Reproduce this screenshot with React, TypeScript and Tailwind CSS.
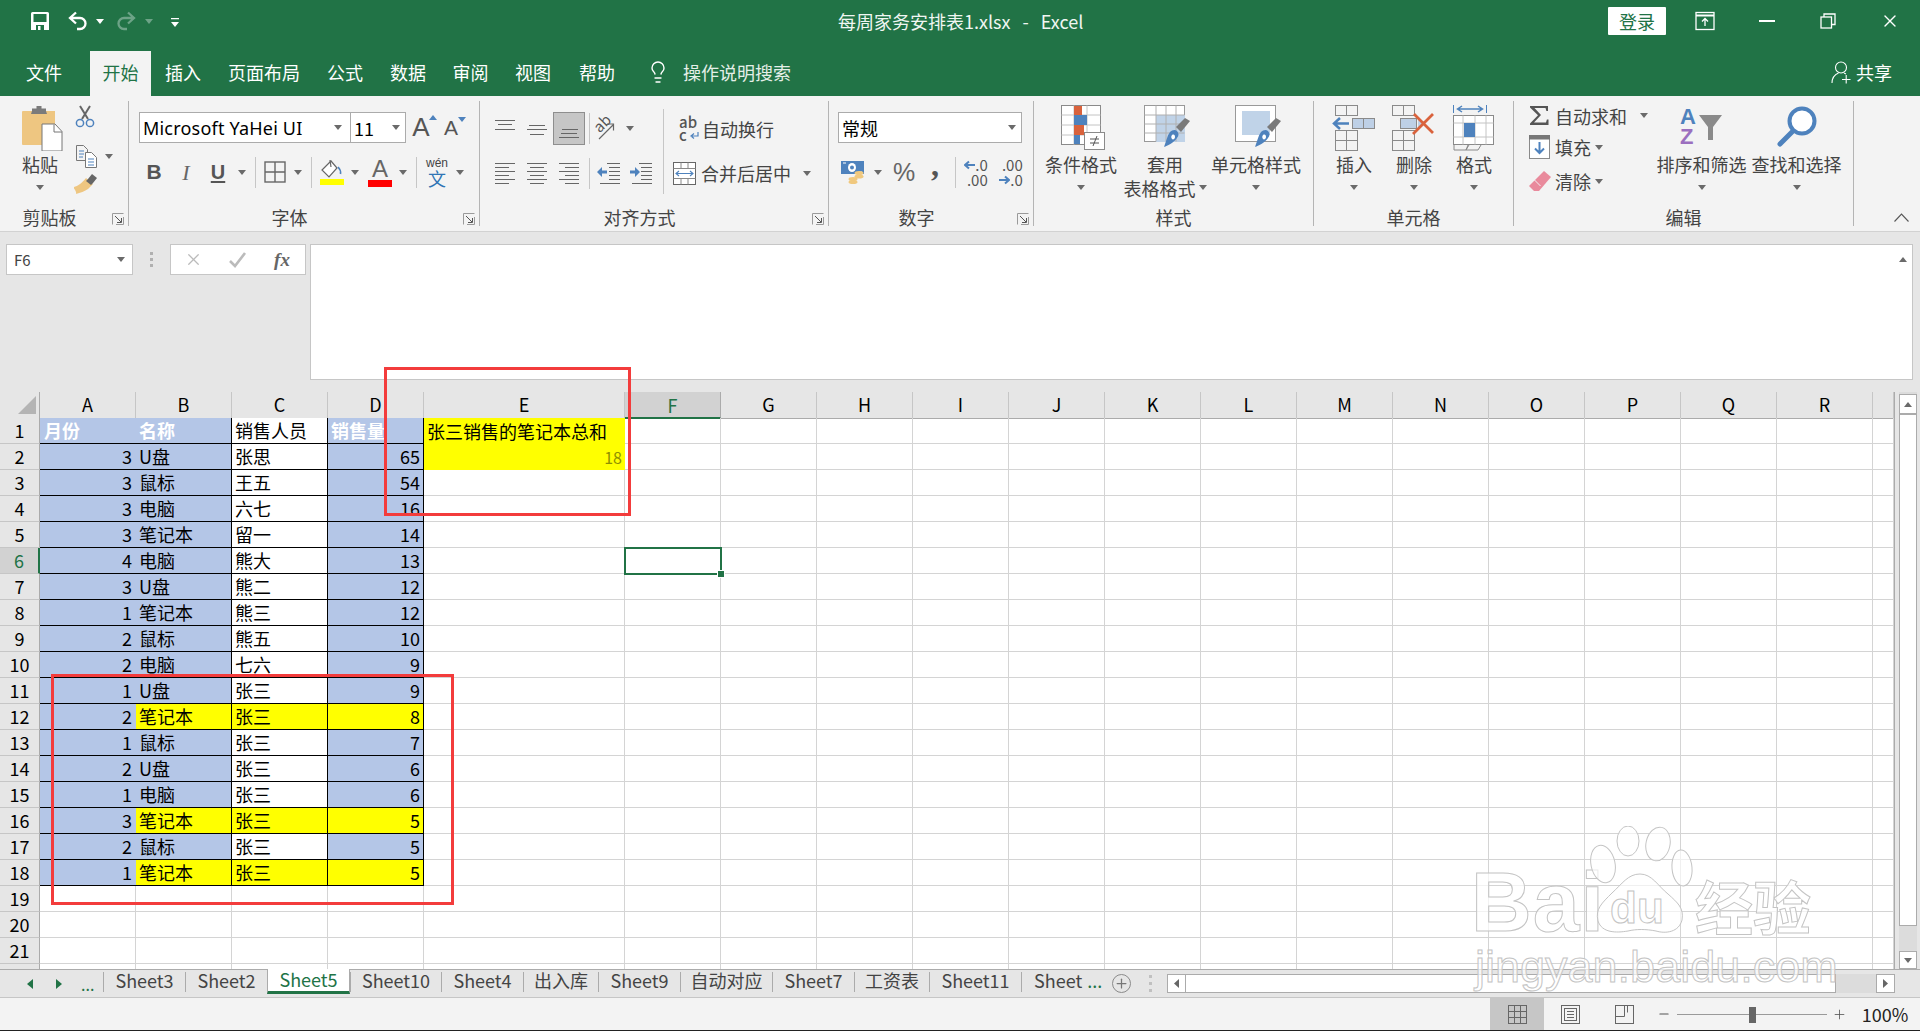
import React from 'react';
import { Minus, Plus, X, Lightbulb } from 'lucide-react';

const Caret = ({ color = '#6a6a6a', up = false }: { color?: string; up?: boolean }) => (
  <svg width="8" height="5" viewBox="0 0 8 5" className="shrink-0">
    <path d={up ? 'M0 5h8L4 0z' : 'M0 0h8L4 5z'} fill={color} />
  </svg>
);

const Launcher = () => (
  <svg width="12" height="12" viewBox="0 0 12 12" className="absolute right-[4px] top-[6px]">
    <path d="M.5 11.5V.5h11" fill="none" stroke="#9a9a9a" />
    <path d="M3 3l6 6M5 9.5h4.5V5" fill="none" stroke="#555" />
    <path d="M11.5 4v7.5H4" fill="none" stroke="#9a9a9a" />
  </svg>
);

const SaveIcon = () => (
  <svg width="20" height="20" viewBox="0 0 20 20">
    <path d="M1 2.5A1.5 1.5 0 0 1 2.5 1h15A1.5 1.5 0 0 1 19 2.5V19H1z" fill="#fff" />
    <rect x="3.5" y="3" width="13" height="8" fill="#217346" />
    <rect x="6" y="14" width="8" height="5" fill="#217346" />
    <rect x="8" y="15" width="2.5" height="4" fill="#fff" />
  </svg>
);

const UndoIcon = ({ color, flip }: { color: string; flip?: boolean }) => (
  <svg width="22" height="22" viewBox="0 0 22 22" className={flip ? '-scale-x-100' : ''}>
    <path d="M9 2.5L3 8l6 5.5M3.5 8H13a5.5 5.5 0 0 1 0 11h-3" fill="none" stroke={color} strokeWidth="2.3" />
  </svg>
);

const QatIcon = () => (
  <svg width="8" height="10" viewBox="0 0 8 10">
    <path d="M0 0h8v1.3H0zM0 4h8L4 9z" fill="#fff" />
  </svg>
);

const RibbonDisplayIcon = () => (
  <svg width="20" height="20" viewBox="0 0 20 20" fill="none" stroke="#fff" strokeWidth="1.3">
    <rect x="1" y="1.5" width="18" height="17" />
    <path d="M1 4.5h18" strokeWidth="2" />
    <path d="M10 15V8M7 10.5L10 7.5l3 3" />
  </svg>
);

const RestoreIcon = () => (
  <svg width="16" height="16" viewBox="0 0 16 16" fill="none" stroke="#fff" strokeWidth="1.3">
    <rect x="1" y="4" width="10.5" height="11" />
    <path d="M4 4V1h11v10.5h-3.5" />
  </svg>
);

const ShareIcon = () => (
  <svg width="20" height="24" viewBox="0 0 20 24" fill="none" stroke="#fff" strokeWidth="1.1">
    <circle cx="10" cy="7.5" r="5.5" />
    <path d="M1 23c0-5 3-8.5 6.5-10M13 13l2 1" />
    <path d="M11 19.5h8.5M15.2 15v8.5" />
  </svg>
);

const PasteIcon = () => (
  <svg width="42" height="46" viewBox="0 0 42 46" className="ml-[3px]">
    <path d="M2 6h32v34H2a1 1 0 0 1-1-1V7a1 1 0 0 1 1-1z" fill="#eec681" />
    <path d="M11 6V3.5h4.5V1h5v2.5H25V6l1 3H10z" fill="#7b7b7b" />
    <path d="M21 19h13l7 7.5V46H21z" fill="#fff" stroke="#777" />
    <path d="M33 19.5V27h8" fill="none" stroke="#777" />
  </svg>
);

const CutIcon = () => (
  <svg width="20" height="23" viewBox="0 0 20 23" fill="none">
    <path d="M5 1l8 13M15 1L7 14" stroke="#666" strokeWidth="2" />
    <circle cx="5" cy="18" r="3.6" stroke="#4e82bd" strokeWidth="1.5" />
    <circle cx="15" cy="18" r="3.6" stroke="#4e82bd" strokeWidth="1.5" />
  </svg>
);

const CopyIcon = () => (
  <svg width="21" height="23" viewBox="0 0 21 23" fill="none">
    <path d="M.5.5h7l4 4v11H.5z" fill="#f3f3f3" stroke="#777" />
    <path d="M9.5 7.5h6l5 5v10h-11z" fill="#fff" stroke="#777" />
    <path d="M3 6h5M3 9h5M3 12h4M12 14h6M12 17h6M12 20h6" stroke="#4e82bd" />
  </svg>
);

const PainterIcon = () => (
  <svg width="24" height="22" viewBox="0 0 24 22">
    <path d="M13 5l7 6-5 5c-3 2-8 4-12 5 1-2-2-5-3-7 4 0 9-4 13-9z" fill="#eec681" transform="translate(-1,0)" />
    <path d="M14 6l4-5 5 4-4 5-2 2-5-4z" fill="#666" />
  </svg>
);

const BorderIcon = () => (
  <svg width="22" height="22" viewBox="0 0 22 22" fill="none" stroke="#666" strokeWidth="1.4">
    <rect x="1" y="1" width="20" height="20" />
    <path d="M11 1v20M1 11h20" />
  </svg>
);

const FillIcon = () => (
  <svg width="26" height="26" viewBox="0 0 26 26">
    <path d="M12 2L3 11l7 7 8-9z" fill="#fff" stroke="#666" strokeWidth="1.2" />
    <path d="M11 1l1 7" stroke="#666" strokeWidth="1.2" />
    <path d="M19 8c2 2 3 4 2.5 7" fill="none" stroke="#4e82bd" strokeWidth="1.6" />
    <rect x="1" y="20" width="24" height="6" fill="#ffff00" />
  </svg>
);

const LineIcon = ({ lines, w = 20, h = 21 }: { lines: [number, number, number][]; w?: number; h?: number }) => (
  <svg width={w} height={h} viewBox={`0 0 ${w} ${h}`}>
    {lines.map(([a, b, y]) => (
      <path key={`${a}-${y}`} d={`M${a} ${y + 0.5}H${b}`} stroke="#666" />
    ))}
  </svg>
);

const stack = (rows: [number, number][]) => rows.map(([a, b], i) => [a, b, i * 4] as [number, number, number]);

const IndentIcon = ({ right }: { right?: boolean }) => (
  <svg width="24" height="21" viewBox="0 0 24 21">
    <path d="M10 .5h13M12 4.5h11M12 8.5h11M12 12.5h11M12 16.5h11M3 20.5h20" stroke="#666" transform="translate(0,0)" />
    <path d={right ? 'M1 7.5h5V4l5 5-5 5v-3.5H1z' : 'M10 7.5H5V4L0 9l5 5v-3.5h5z'} fill="#4e82bd" />
  </svg>
);

const OrientIcon = () => (
  <span className="relative block w-[22px] h-[26px]">
    <span className="absolute left-0 top-[-3px] text-[15px] leading-[20px] text-[#555] -rotate-45 origin-center">ab</span>
    <svg width="24" height="26" viewBox="0 0 24 26" className="absolute left-0 top-0">
      <path d="M6 23L20 9M14 8h6.500v6.500" fill="none" stroke="#666" strokeWidth="1.2" />
    </svg>
  </span>
);

const WrapIcon = () => (
  <span className="relative block w-[20px] h-[28px] text-[#555] text-[15px] leading-[13px] font-medium">
    <span className="block">ab</span>
    <span className="block">c</span>
    <svg width="9" height="8" viewBox="0 0 9 8" className="absolute right-0 bottom-[3px]">
      <path d="M8 0v4H2M4 1.500L1 4l3 2.500" fill="none" stroke="#4e82bd" strokeWidth="1.2" />
    </svg>
  </span>
);

const MergeIcon = () => (
  <svg width="23" height="23" viewBox="0 0 23 23" fill="none">
    <rect x=".5" y=".5" width="22" height="22" fill="#fff" stroke="#666" />
    <path d="M.5 6.500h22M.5 16.500h22M8 .5v6M15 .5v6M8 16.500v6M15 16.500v6" stroke="#888" />
    <path d="M3 11.500h17M6 9l-3 2.500L6 14M17 9l3 2.500L17 14" stroke="#4e82bd" strokeWidth="1.1" />
  </svg>
);

const CurrencyIcon = () => (
  <svg width="24" height="24" viewBox="0 0 24 24">
    <rect x="0" y="1" width="23" height="13" fill="#4e82bd" />
    <ellipse cx="11" cy="7.500" rx="4" ry="4.500" fill="#fff" />
    <circle cx="11" cy="7.500" r="2" fill="#4e82bd" />
    <path d="M2 3h3M18 12h3" stroke="#fff" />
    <ellipse cx="18" cy="13" rx="4.500" ry="2" fill="#f0c87e" />
    <ellipse cx="18" cy="16.500" rx="4.500" ry="2" fill="#f0c87e" />
    <ellipse cx="12" cy="19" rx="4.500" ry="2" fill="#f0c87e" />
    <ellipse cx="12" cy="22" rx="4.500" ry="2" fill="#f0c87e" />
  </svg>
);

const Arrow = ({ right }: { right?: boolean }) => (
  <svg width="11" height="10" viewBox="0 0 11 10">
    <path d={right ? 'M0 5h9M6 1.500L10 5 6 8.500' : 'M11 5H2M5 1.500L1 5l4 3.500'} fill="none" stroke="#4e82bd" strokeWidth="2" />
  </svg>
);

const CondIcon = () => (
  <svg width="46" height="46" viewBox="0 0 46 46" fill="none">
    <rect x=".5" y=".5" width="39" height="39" fill="#fff" stroke="#8a8a8a" />
    <path d="M13 .5v39M26 .5v39M.5 10h39M.5 20h39M.5 30h39" stroke="#c4c4c4" />
    <rect x="13" y="1" width="8" height="9" fill="#d9623c" />
    <rect x="13" y="10" width="13" height="10" fill="#4e82bd" />
    <rect x="13" y="20" width="10" height="10" fill="#d9623c" />
    <rect x="13" y="30" width="6" height="9" fill="#4e82bd" />
    <rect x="23.500" y="27.500" width="20" height="17" fill="#fff" stroke="#8a8a8a" />
    <path d="M29 34h9M29 38h9M36 31l-4 10" stroke="#555" />
  </svg>
);

const TableIcon = ({ grid }: { grid?: boolean }) => (
  <svg width="46" height="44" viewBox="0 0 46 44" fill="none">
    <rect x=".5" y=".5" width="40" height="36" fill="#fff" stroke="#999" />
    <rect x={grid ? 7 : 12} y={grid ? 6 : 10} width={grid ? 28 : 29} height={grid ? 24 : 27} fill="#c0d3e8" />
    {grid ? null : <path d="M12 .5v36M22 .5v36M32 .5v36M.5 10h40M.5 19h40M.5 28h40" stroke="#b0b0b0" />}
    <path d="M32 21l9-9 5 3-9 11z" fill="#7a7a7a" transform="translate(0,1)" />
    <path d="M26 27c2-2 5-3 7-1 2 2 2 5 0 7-3 4-6 6-13 9 2-5 3-11 6-15z" fill="#4e82bd" />
    <path d="M28 30c2-1 3 0 3 2s-2 3-3 2-1-3 0-4z" fill="#fff" />
  </svg>
);

const InsertIcon = () => (
  <svg width="44" height="46" viewBox="0 0 44 46" fill="none" stroke="#8a8a8a">
    <rect x="3.500" y=".5" width="22" height="10" />
    <path d="M14.500 .5v10" />
    <rect x="3.500" y="25.500" width="22" height="20" />
    <path d="M14.500 25.500v20M3.500 35.500h22" />
    <rect x="20.500" y="13.500" width="22" height="10" fill="#bed0e6" />
    <path d="M31.500 13.500v10" />
    <path d="M17 18.500H3M8 13l-6 5.500L8 24" stroke="#4e82bd" strokeWidth="2.500" />
  </svg>
);

const DeleteIcon = () => (
  <svg width="44" height="46" viewBox="0 0 44 46" fill="none" stroke="#8a8a8a">
    <rect x=".5" y=".5" width="22" height="10" />
    <path d="M11.500 .5v10" />
    <rect x=".5" y="25.500" width="22" height="20" />
    <path d="M11.500 25.500v20M.5 35.500h22" />
    <rect x="8.500" y="13.500" width="16" height="10" fill="#bed0e6" />
    <path d="M26 13.500l5 5-5 5z" fill="#bed0e6" stroke="none" />
    <path d="M22 9l19 19M41 9L21 29" stroke="#d9623c" strokeWidth="2.800" />
  </svg>
);

const FormatIcon = () => (
  <svg width="42" height="46" viewBox="0 0 42 46" fill="none">
    <path d="M.5 0v8M33.500 0v8" stroke="#4e82bd" />
    <path d="M5 4h24M9 1L4.500 4 9 7M25 1l4.500 3L25 7" stroke="#4e82bd" strokeWidth="1.500" />
    <rect x=".5" y="10.500" width="40" height="29" fill="#fff" stroke="#8a8a8a" />
    <path d="M10 10.500v29M22 10.500v29M33 10.500v29M.5 18h40M.5 32h40" stroke="#c4c4c4" />
    <rect x="11" y="18" width="11" height="14" fill="#4e82bd" />
    <path d="M1 40v5h12l2-5M16 40l-3 5h12l3-5" stroke="#8a8a8a" />
  </svg>
);

const SigmaIcon = () => (
  <svg width="19" height="19" viewBox="0 0 19 19">
    <path d="M0 0h18v5h-1.600l-.9-3H4.500L11 9l-7 7.500h12l.9-3H18.500V19H0v-1.500L8 9.300 0 1.500z" fill="#555" />
  </svg>
);

const FillDownIcon = () => (
  <svg width="21" height="24" viewBox="0 0 21 24" fill="none">
    <rect x=".5" y=".5" width="20" height="23" fill="#fff" stroke="#8a8a8a" />
    <rect x="0" y="0" width="21" height="4.500" fill="#777" />
    <path d="M10.500 7v11M6 13.500l4.500 4.500 4.500-4.500" stroke="#4e82bd" strokeWidth="2" />
  </svg>
);

const EraserIcon = () => (
  <svg width="22" height="21" viewBox="0 0 22 21">
    <path d="M15 0l7 6-12 14H5l-5-5z" fill="#e98a9c" />
    <path d="M5.500 9l6 6" stroke="#f3f3f3" />
  </svg>
);

const SortIcon = () => (
  <svg width="44" height="42" viewBox="0 0 44 42">
    <text x="0" y="19" fontSize="22" fontWeight="700" fill="#4e82bd" fontFamily="Liberation Sans">A</text>
    <text x="0" y="39" fontSize="22" fontWeight="700" fill="#9b6fbf" fontFamily="Liberation Sans">Z</text>
    <path d="M19 10h23L33 22v13h-5V22z" fill="#8a8a8a" />
  </svg>
);

const FindIcon = () => (
  <svg width="44" height="42" viewBox="0 0 44 42" fill="none">
    <circle cx="27" cy="16" r="12.500" stroke="#4e82bd" strokeWidth="4" fill="#fff" />
    <path d="M17 27L5 39" stroke="#4e82bd" strokeWidth="5" strokeLinecap="round" />
  </svg>
);

const Sep = ({ h = 31 }: { h?: number }) => (
  <span className="block w-px bg-[#c6c6c6]" style={{ height: h }} />
);

const Slot = ({ w, children }: { w: number; children?: React.ReactNode }) => (
  <div className="flex items-center justify-center shrink-0" style={{ width: w }}>
    {children}
  </div>
);

const Group = ({ w, label, launcher, children }: { w: number; label: string; launcher?: boolean; children: React.ReactNode }) => (
  <div className="flex flex-col shrink-0 h-[125px] border-r border-[#b4b4b4]" style={{ width: w }}>
    <div className="h-[106px]">{children}</div>
    <div className={`relative h-[19px] pt-[2px] flex items-center justify-center text-[18px] leading-[19px] text-[#444] ${launcher ? 'pr-[29px]' : ''}`}>
      {label}
      {launcher && <Launcher />}
    </div>
  </div>
);

const BigButton = ({ w, icon, line1, line2, caretRight }: { w: number; icon: React.ReactNode; line1: string; line2?: string; caretRight?: boolean }) => (
  <div className="flex flex-col items-center shrink-0" style={{ width: w }}>
    <div className="h-[47px] mt-[3px] flex items-start justify-center">{icon}</div>
    <div className="h-[24px] text-[18px] leading-[24px] text-[#444] whitespace-nowrap">{line1}</div>
    <div className="h-[23px] flex items-center gap-[3px] text-[18px] leading-[22px] text-[#444] whitespace-nowrap">
      {line2}
      {(!line2 || caretRight) && <Caret />}
    </div>
  </div>
);

const MENU: [string, number][] = [
  ['插入', 64],
  ['页面布局', 98],
  ['公式', 64],
  ['数据', 62],
  ['审阅', 63],
  ['视图', 62],
  ['帮助', 66],
];

const COLS = ['A', 'B', 'C', 'D', 'E', 'F', 'G', 'H', 'I', 'J', 'K', 'L', 'M', 'N', 'O', 'P', 'Q', 'R', ''];

const DATA: [string, string, string, string, boolean][] = [
  ['3', 'U盘', '张思', '65', false],
  ['3', '鼠标', '王五', '54', false],
  ['3', '电脑', '六七', '16', false],
  ['3', '笔记本', '留一', '14', false],
  ['4', '电脑', '熊大', '13', false],
  ['3', 'U盘', '熊二', '12', false],
  ['1', '笔记本', '熊三', '12', false],
  ['2', '鼠标', '熊五', '10', false],
  ['2', '电脑', '七六', '9', false],
  ['1', 'U盘', '张三', '9', false],
  ['2', '笔记本', '张三', '8', true],
  ['1', '鼠标', '张三', '7', false],
  ['2', 'U盘', '张三', '6', false],
  ['1', '电脑', '张三', '6', false],
  ['3', '笔记本', '张三', '5', true],
  ['2', '鼠标', '张三', '5', false],
  ['1', '笔记本', '张三', '5', true],
];

const SHEETS: [string, number][] = [
  ['Sheet3', 82],
  ['Sheet2', 82],
  ['Sheet5', 83],
  ['Sheet10', 91],
  ['Sheet4', 82],
  ['出入库', 75],
  ['Sheet9', 82],
  ['自动对应', 92],
  ['Sheet7', 82],
  ['工资表', 75],
  ['Sheet11', 92],
];

const GRID_LINE = 'border-r border-b border-[#d4d4d4]';
const CELL = 'flex items-center overflow-hidden whitespace-nowrap text-[18px] leading-[24px] pb-[1px] text-black';

function HeaderRow() {
  return (
    <>
      <div className="h-[27px] bg-[#e6e6e6] border-r border-b border-[#ababab] flex items-end justify-end pr-[3px] pb-[4px]">
        <svg width="18" height="18" viewBox="0 0 18 18">
          <path d="M18 0v18H0z" fill="#b4b4b4" />
        </svg>
      </div>
      {COLS.map(c =>
        c === 'F' ? (
          <div key="F" className="h-[27px] bg-[#d2d2d2] border-r border-[#ababab] border-b-2 border-b-[#217346] flex items-center justify-center text-[18px] leading-[24px] text-[#217346]">
            F
          </div>
        ) : (
          <div key={c || 'S'} className="h-[27px] pb-[2px] bg-[#e6e6e6] border-r border-r-[#c6c6c6] border-b border-b-[#ababab] flex items-center justify-center text-[18px] leading-[24px] text-black">
            {c}
          </div>
        ),
      )}
    </>
  );
}

function Blanks({ row, from }: { row: number; from: number }) {
  return (
    <>
      {COLS.slice(from).map((c, i) =>
        row === 6 && c === 'F' ? (
          <div key={i} className="relative z-10 outline-2 -outline-offset-1 outline-[#217346]">
            <span className="absolute right-[-4px] bottom-[-4px] w-[6px] h-[6px] bg-[#217346] border border-white box-content" />
          </div>
        ) : (
          <div key={i} className={GRID_LINE} />
        ),
      )}
    </>
  );
}

function RowHead({ n }: { n?: number }) {
  return n === 6 ? (
    <div className="bg-[#d2d2d2] border-b border-b-[#c6c6c6] border-r-2 border-r-[#217346] flex items-center justify-center pb-[1px] text-[18px] leading-[24px] text-[#217346]">
      {n}
    </div>
  ) : (
    <div className="bg-[#e6e6e6] border-b border-b-[#c6c6c6] border-r border-r-[#ababab] flex items-center justify-center pb-[1px] text-[18px] leading-[24px] text-black">
      {n}
    </div>
  );
}

function Sheet() {
  return (
    <div className="grid grid-cols-[40px_repeat(4,96px)_201px_repeat(13,96px)_21px] auto-rows-[26px] bg-white">
      <HeaderRow />
      <RowHead n={1} />
      <div className={`${CELL} bg-[#b4c6e7] border-b border-black pl-[4px] font-bold`}><span className="text-white">月份</span></div>
      <div className={`${CELL} bg-[#b4c6e7] border-b border-r border-black pl-[3px] font-bold`}><span className="text-white">名称</span></div>
      <div className={`${CELL} bg-white border-b border-r border-black pl-[3px]`}>销售人员</div>
      <div className={`${CELL} bg-[#b4c6e7] border-b border-r border-black pl-[3px] font-bold`}><span className="text-white">销售量</span></div>
      <div className={`${CELL} bg-[#ffff00] pl-[3px]`}>张三销售的笔记本总和</div>
      <Blanks row={1} from={5} />
      {DATA.map((r, i) => {
        const n = i + 2;
        return (
          <React.Fragment key={n}>
            <RowHead n={n} />
            <div className={`${CELL} justify-end bg-[#b4c6e7] border-b border-black pr-[4px]`}>{r[0]}</div>
            <div className={`${CELL} ${r[4] ? 'bg-[#ffff00]' : 'bg-[#b4c6e7]'} border-b border-r border-black pl-[3px]`}>{r[1]}</div>
            <div className={`${CELL} ${r[4] ? 'bg-[#ffff00]' : 'bg-white'} border-b border-r border-black pl-[3px]`}>{r[2]}</div>
            <div className={`${CELL} justify-end ${r[4] ? 'bg-[#ffff00]' : 'bg-[#b4c6e7]'} border-b border-r border-black pr-[3px]`}>{r[3]}</div>
            {n === 2 ? (
              <div className={`${CELL} justify-end bg-[#ffff00] pr-[3px]`}>
                <span className="text-[16px] text-[#8f8f00]">18</span>
              </div>
            ) : (
              <div className={GRID_LINE} />
            )}
            <Blanks row={n} from={5} />
          </React.Fragment>
        );
      })}
      {[19, 20, 21].map(n => (
        <React.Fragment key={n}>
          <RowHead n={n} />
          <Blanks row={n} from={0} />
        </React.Fragment>
      ))}
      <RowHead />
      <Blanks row={22} from={0} />
    </div>
  );
}

function Ribbon() {
  return (
    <div className="h-[136px] shrink-0 bg-[#f3f3f3] border-b border-[#d2d2d2] pt-[5px] flex text-[#444]">
      <Group w={129} label="剪贴板" launcher>
        <div className="flex pt-[1px]">
          <div className="ml-[16px] w-[48px]">
            <BigButton w={48} icon={<PasteIcon />} line1="粘贴" />
          </div>
          <div className="ml-[10px] flex flex-col pt-[3px]">
            <div className="h-[34px] pl-[1px]"><CutIcon /></div>
            <div className="h-[34px] flex items-center gap-[8px] pl-[2px]">
              <CopyIcon />
              <Caret />
            </div>
            <div className="h-[24px]"><PainterIcon /></div>
          </div>
        </div>
      </Group>

      <Group w={351} label="字体" launcher>
        <div className="flex flex-col pt-[11px] pl-[10px]">
          <div className="flex h-[31px]">
            <div className="w-[212px] border border-[#ababab] bg-white flex items-center justify-between pl-[3px] pr-[8px] text-[18px] leading-[24px] text-black tracking-[0.2px] [font-family:'Noto_Sans',sans-serif]">
              Microsoft YaHei UI
              <Caret />
            </div>
            <div className="w-[56px] -ml-px border border-[#ababab] bg-white flex items-center justify-between pl-[3px] pr-[5px] text-[18px] leading-[24px] text-black">
              11
              <Caret />
            </div>
            <Slot w={30}>
              <span className="relative text-[26px] leading-[31px] font-medium text-[#555] [font-family:'Liberation_Sans',sans-serif]">
                A
                <span className="absolute right-[-7px] top-[3px]"><Caret color="#4e82bd" up /></span>
              </span>
            </Slot>
            <Slot w={30}>
              <span className="relative text-[21px] leading-[31px] font-medium text-[#555] [font-family:'Liberation_Sans',sans-serif]">
                A
                <span className="absolute right-[-8px] top-[5px]"><Caret color="#4e82bd" /></span>
              </span>
            </Slot>
          </div>
          <div className="flex items-center h-[32px] mt-[13px] -ml-px">
            <Slot w={32}><span className="text-[21px] font-bold text-[#555] [font-family:'Liberation_Sans',sans-serif]">B</span></Slot>
            <Slot w={32}><span className="text-[22px] italic font-medium text-[#666] [font-family:'Liberation_Serif',serif]">I</span></Slot>
            <Slot w={32}><span className="text-[20px] font-bold underline underline-offset-2 text-[#555] [font-family:'Liberation_Sans',sans-serif]">U</span></Slot>
            <Slot w={16}><Caret /></Slot>
            <Slot w={10}><Sep /></Slot>
            <Slot w={30}><BorderIcon /></Slot>
            <Slot w={16}><Caret /></Slot>
            <Slot w={10}><Sep /></Slot>
            <Slot w={32}><FillIcon /></Slot>
            <Slot w={14}><Caret /></Slot>
            <Slot w={36}>
              <span className="flex flex-col items-center">
                <span className="text-[24px] leading-[22px] font-medium text-[#666] [font-family:'Liberation_Sans',sans-serif]">A</span>
                <span className="block w-[24px] h-[7px] bg-[#ff0000]" />
              </span>
            </Slot>
            <Slot w={10}><Caret /></Slot>
            <Slot w={16}><Sep /></Slot>
            <Slot w={26}>
              <span className="flex flex-col items-center text-[#2f75b5]">
                <span className="text-[12px] leading-[12px] text-[#444] [font-family:'Liberation_Sans',sans-serif]">wén</span>
                <span className="text-[18px] leading-[19px]">文</span>
              </span>
            </Slot>
            <Slot w={20}><Caret /></Slot>
          </div>
        </div>
      </Group>

      <Group w={349} label="对齐方式" launcher>
        <div className="flex pt-[11px] pl-[9px]">
          <div className="flex flex-col w-[168px]">
            <div className="flex h-[33px] items-center">
              <Slot w={32}><LineIcon w={20} h={18} lines={[[0, 20, 0], [3, 17, 4], [0, 20, 9]]} /></Slot>
              <Slot w={32}><LineIcon w={20} h={18} lines={[[2, 18, 5], [0, 20, 9], [3, 17, 14]]} /></Slot>
              <Slot w={32}>
                <div className="w-[32px] h-[33px] bg-[#c6c6c6] border border-[#8e8e8e] flex items-end justify-center pb-[5px]">
                  <LineIcon w={20} h={10} lines={[[3, 19, 0], [2, 18, 4], [0, 20, 8]]} />
                </div>
              </Slot>
              <Slot w={8}><Sep /></Slot>
              <Slot w={20}><OrientIcon /></Slot>
              <Slot w={34}><Caret /></Slot>
            </div>
            <div className="flex h-[32px] items-center mt-[12px]">
              <Slot w={32}><LineIcon lines={stack([[0, 20], [0, 14], [0, 20], [0, 14], [0, 20], [0, 14]])} /></Slot>
              <Slot w={32}><LineIcon lines={stack([[0, 20], [3, 17], [0, 20], [3, 17], [0, 20], [3, 17]])} /></Slot>
              <Slot w={32}><LineIcon lines={stack([[0, 20], [6, 20], [0, 20], [6, 20], [0, 20], [6, 20]])} /></Slot>
              <Slot w={8}><Sep /></Slot>
              <Slot w={32}><IndentIcon /></Slot>
              <Slot w={32}><IndentIcon right /></Slot>
            </div>
          </div>
          <div className="flex items-start justify-center w-[13px] -mt-[3px]"><Sep h={85} /></div>
          <div className="flex flex-col">
            <div className="flex items-center h-[33px] pl-[9px] gap-[3px]">
              <WrapIcon />
              <span className="text-[18px] leading-[24px]">自动换行</span>
            </div>
            <div className="flex items-center h-[32px] mt-[12px] pl-[3px]">
              <MergeIcon />
              <span className="text-[18px] leading-[24px] ml-[5px] whitespace-nowrap">合并后居中</span>
              <span className="ml-[12px]"><Caret /></span>
            </div>
          </div>
        </div>
      </Group>

      <Group w={205} label="数字" launcher>
        <div className="flex flex-col pt-[11px] pl-[9px]">
          <div className="w-[184px] h-[31px] border border-[#ababab] bg-white flex items-center justify-between pl-[3px] pr-[5px] text-[18px] leading-[24px] text-black">
            常规
            <Caret />
          </div>
          <div className="flex items-center h-[32px] mt-[13px] text-[#555]">
            <Slot w={30}><CurrencyIcon /></Slot>
            <Slot w={20}><Caret /></Slot>
            <Slot w={32}><span className="text-[25px] leading-[30px] [font-family:'Liberation_Sans',sans-serif] text-[#666]">%</span></Slot>
            <Slot w={30}><span className="text-[32px] leading-[20px] font-bold text-[#555] [font-family:'Liberation_Serif',serif] -mt-[14px]">,</span></Slot>
            <Slot w={10}><Sep /></Slot>
            <Slot w={32}>
              <span className="flex flex-col items-end text-[15px] leading-[15px] text-[#555]">
                <span className="flex items-center"><Arrow />.0</span>
                <span>.00</span>
              </span>
            </Slot>
            <Slot w={38}>
              <span className="flex flex-col items-end text-[15px] leading-[15px] text-[#555]">
                <span>.00</span>
                <span className="flex items-center"><Arrow right />.0</span>
              </span>
            </Slot>
          </div>
        </div>
      </Group>

      <Group w={280} label="样式">
        <div className="flex pl-[5px] pt-[1px]">
          <BigButton w={84} icon={<span className="ml-[5px] block"><CondIcon /></span>} line1="条件格式" />
          <BigButton w={84} icon={<span className="ml-[3px] block"><TableIcon /></span>} line1="套用" line2="表格格式" caretRight />
          <BigButton w={98} icon={<span className="ml-[3px] block"><TableIcon grid /></span>} line1="单元格样式" />
        </div>
      </Group>

      <Group w={200} label="单元格">
        <div className="flex pl-[10px] pt-[1px]">
          <BigButton w={60} icon={<InsertIcon />} line1="插入" />
          <BigButton w={60} icon={<DeleteIcon />} line1="删除" />
          <BigButton w={60} icon={<FormatIcon />} line1="格式" />
        </div>
      </Group>

      <Group w={340} label="编辑">
        <div className="flex">
          <div className="w-[140px] pl-[15px] flex flex-col text-[18px] leading-[24px]">
            <div className="flex items-center h-[29px]">
              <Slot w={21}><SigmaIcon /></Slot>
              <span className="ml-[5px]">自动求和</span>
              <span className="ml-[13px]"><Caret /></span>
            </div>
            <div className="flex items-center h-[34px]">
              <Slot w={21}><FillDownIcon /></Slot>
              <span className="ml-[5px]">填充</span>
              <span className="ml-[4px]"><Caret /></span>
            </div>
            <div className="flex items-center h-[34px]">
              <Slot w={22}><EraserIcon /></Slot>
              <span className="ml-[4px]">清除</span>
              <span className="ml-[4px]"><Caret /></span>
            </div>
          </div>
          <div className="flex pt-[1px]">
            <BigButton w={95} icon={<SortIcon />} line1="排序和筛选" />
            <BigButton w={95} icon={<FindIcon />} line1="查找和选择" />
          </div>
        </div>
      </Group>

      <div className="flex-1 flex items-end justify-end pr-[11px] pb-[9px]">
        <svg width="15" height="9" viewBox="0 0 15 9">
          <path d="M.5 8.500L7.500 1l7 7.500" fill="none" stroke="#555" strokeWidth="1.100" />
        </svg>
      </div>
    </div>
  );
}

function FormulaBar() {
  return (
    <div className="h-[160px] shrink-0 bg-[#e6e6e6] pt-[12px] flex items-start">
      <div className="ml-[6px] w-[127px] h-[31px] border border-[#c6c6c6] bg-white flex items-center justify-between pl-[7px] pr-[7px] text-[15px] leading-[20px] text-[#444]">
        F6
        <Caret />
      </div>
      <div className="w-[37px] h-[31px] flex flex-col items-center justify-center gap-[3px]">
        <span className="w-[3px] h-[3px] bg-[#b0b0b0]" />
        <span className="w-[3px] h-[3px] bg-[#b0b0b0]" />
        <span className="w-[3px] h-[3px] bg-[#b0b0b0]" />
      </div>
      <div className="w-[136px] h-[31px] border border-[#c6c6c6] bg-white flex items-center">
        <Slot w={44}>
          <X size={19} strokeWidth={1.6} color="#bbb" />
        </Slot>
        <Slot w={45}>
          <svg width="18" height="16" viewBox="0 0 18 16">
            <path d="M1 9l5 5L16 1" fill="none" stroke="#bbb" strokeWidth="2.600" />
          </svg>
        </Slot>
        <Slot w={44}>
          <span className="text-[19px] leading-[24px] italic font-bold text-[#666] [font-family:'Liberation_Serif',serif]">fx</span>
        </Slot>
      </div>
      <div className="ml-[4px] w-[1603px] h-[136px] border border-[#c6c6c6] bg-white flex justify-end pt-[12px] pr-[5px]">
        <Caret up />
      </div>
    </div>
  );
}

function VScroll() {
  return (
    <div className="ml-[4px] w-[18px] flex flex-col bg-[#dcdcdc] self-stretch">
      <div className="h-[21px] mt-[2px] bg-white border border-[#ababab] border-b-2 flex items-center justify-center">
        <Caret up />
      </div>
      <div className="h-[511px] bg-white border-x border-b border-[#ababab]" />
      <div className="flex-1" />
      <div className="h-[18px] bg-white border border-[#ababab] flex items-center justify-center">
        <Caret />
      </div>
    </div>
  );
}

function TabBar() {
  return (
    <div className="h-[29px] shrink-0 bg-[#e6e6e6] border-y border-t-[#ababab] border-b-[#c6c6c6] flex items-start">
      <div className="w-[103px] h-[27px] flex items-center text-[#217346]">
        <span className="ml-[27px]"><svg width="6" height="10" viewBox="0 0 6 10"><path d="M6 0v10L0 5z" fill="#217346" /></svg></span>
        <span className="ml-[23px]"><svg width="6" height="10" viewBox="0 0 6 10"><path d="M0 0v10l6-5z" fill="#217346" /></svg></span>
        <span className="ml-[19px] text-[16px] leading-[20px]">...</span>
      </div>
      {SHEETS.map(([name, w]) =>
        name === 'Sheet5' ? (
          <div key={name} className="h-[25px] -mt-px pb-[2px] bg-white border-x border-[#ababab] border-b-[3px] border-b-[#217346] flex items-center justify-center text-[18px] leading-[20px] text-[#217346]" style={{ width: w }}>
            {name}
          </div>
        ) : (
          <div key={name} className="h-[20px] mt-[2px] pb-[5px] border-l border-[#ababab] flex items-center justify-center text-[18px] leading-[20px] text-[#444]" style={{ width: w }}>
            {name}
          </div>
        ),
      )}
      <div className="w-[84px] h-[20px] mt-[2px] pb-[5px] border-l border-[#ababab] flex items-center pl-[12px] text-[18px] leading-[20px] text-[#444]">
        Sheet
        <span className="ml-[5px] text-[#217346]">...</span>
      </div>
      <div className="ml-[7px] mt-[4px] w-[19px] h-[19px] rounded-full border border-[#8a8a8a] flex items-center justify-center">
        <Plus size={15} color="#777" strokeWidth={2} />
      </div>
      <div className="ml-[18px] mt-[5px] h-[17px] flex flex-col justify-between">
        <span className="block w-[3px] h-[3px] bg-[#c0c0c0]" />
        <span className="block w-[3px] h-[3px] bg-[#c0c0c0]" />
        <span className="block w-[3px] h-[3px] bg-[#c0c0c0]" />
      </div>
      <div className="ml-[15px] mt-[4px] flex h-[19px] w-[728px] bg-[#dcdcdc]">
        <div className="w-[19px] bg-white border border-[#ababab] flex items-center justify-center">
          <svg width="5" height="9" viewBox="0 0 5 9"><path d="M5 0v9L0 4.500z" fill="#666" /></svg>
        </div>
        <div className="w-[650px] bg-white border-y border-r border-[#ababab]" />
        <div className="flex-1" />
        <div className="w-[19px] bg-white border border-[#ababab] flex items-center justify-center">
          <svg width="5" height="9" viewBox="0 0 5 9"><path d="M0 0v9l5-4.500z" fill="#666" /></svg>
        </div>
      </div>
    </div>
  );
}

function StatusBar() {
  return (
    <div className="h-[33px] shrink-0 bg-[#f3f3f3] border-b border-b-[#222] flex justify-end items-stretch text-[#444]">
      <div className="w-[54px] bg-[#c6c6c6] flex items-center justify-center">
        <svg width="19" height="19" viewBox="0 0 19 19" fill="none" stroke="#666">
          <rect x=".5" y=".5" width="18" height="18" />
          <path d="M6.500 .5v18M12.500 .5v18M.5 6.500h18M.5 12.500h18" />
        </svg>
      </div>
      <div className="w-[53px] flex items-center justify-center">
        <svg width="19" height="19" viewBox="0 0 19 19" fill="none" stroke="#666">
          <rect x=".5" y=".5" width="18" height="18" />
          <rect x="3.500" y="3.500" width="12" height="12" />
          <path d="M6 6.500h7M6 9.500h7M6 12.500h7" />
        </svg>
      </div>
      <div className="w-[54px] flex items-center justify-center">
        <svg width="19" height="19" viewBox="0 0 19 19" fill="none" stroke="#666">
          <rect x=".5" y=".5" width="18" height="18" />
          <path d="M9.500 .5v11M.5 11.500h9M12.500 .5v7" />
        </svg>
      </div>
      <div className="w-[26px] flex items-center justify-center"><Minus size={14} color="#555" /></div>
      <div className="w-[150px] relative flex items-center">
        <span className="block w-full h-px bg-[#9a9a9a]" />
        <span className="absolute left-[72px] top-[9px] w-[7px] h-[16px] bg-[#666]" />
      </div>
      <div className="w-[24px] flex items-center justify-center"><Plus size={15} color="#555" strokeWidth={1.3} /></div>
      <div className="w-[69px] flex items-center justify-center text-[18px] leading-[24px] text-[#222] pr-[1px]">100%</div>
    </div>
  );
}

function Watermark() {
  const stroke = "text-white/70 [-webkit-text-stroke:1px_#c4c4c4] [font-family:'Liberation_Sans',sans-serif]";
  return (
    <div className="absolute left-[1470px] top-[820px] w-[350px] h-[172px] pointer-events-none">
      <span className={`absolute left-[1px] top-[40px] text-[84px] leading-[84px] tracking-[1px] font-bold ${stroke}`}>Bai</span>
      <svg width="104" height="110" viewBox="0 0 104 110" className="absolute left-[120px] top-[6px]">
        <g fill="#ffffff" fillOpacity="0.65" stroke="#c4c4c4">
          <ellipse cx="13" cy="38" rx="12" ry="19" transform="rotate(-12 13 38)" />
          <ellipse cx="38" cy="15" rx="11" ry="15" />
          <ellipse cx="68" cy="18" rx="12" ry="17" transform="rotate(12 68 18)" />
          <ellipse cx="92" cy="42" rx="10" ry="18" transform="rotate(-5 92 42)" />
          <path d="M50 48c12 0 18 12 28 20 10 9 16 14 14 26-3 12-16 14-26 11-10-2-20-2-28 0-12 2-26 2-30-10-3-12 4-18 14-28 10-9 16-19 28-19z" />
        </g>
      </svg>
      <span className={`absolute left-[140px] top-[58px] text-[44px] leading-[60px] font-bold ${stroke}`}>du</span>
      <span className="absolute left-[225px] top-[50px] text-[58px] leading-[70px] text-white/70 [-webkit-text-stroke:1px_#c4c4c4] font-bold">经验</span>
      <span className={`absolute left-[5px] top-[122px] text-[45px] leading-[50px] ${stroke}`}>jingyan.baidu.com</span>
    </div>
  );
}

export default function App() {
  return (
    <div className="relative w-[1920px] h-[1031px] overflow-hidden flex flex-col [font-family:'Noto_Sans_CJK_SC','Noto_Sans',sans-serif]">
      <div className="h-[51px] shrink-0 bg-[#217346] relative flex items-start pt-[7px] text-white">
        <div className="flex items-center h-[28px] pl-[30px]">
          <SaveIcon />
          <span className="ml-[17px]"><UndoIcon color="#fff" /></span>
          <span className="ml-[7px]"><Caret color="#fff" /></span>
          <span className="ml-[11px]"><UndoIcon color="#6da387" flip /></span>
          <span className="ml-[8px]"><Caret color="#6da387" /></span>
          <span className="ml-[18px] mt-[3px]"><QatIcon /></span>
        </div>
        <span className="absolute left-[838px] top-[7px] text-[18px] leading-[28px] whitespace-nowrap text-[#f0f6f2] [word-spacing:2px]">每周家务安排表1.xlsx&nbsp; -&nbsp; Excel</span>
        <div className="ml-auto flex items-center h-[28px]">
          <div className="w-[58px] h-[28px] bg-white rounded-[1px] flex items-center justify-center text-[18px] leading-[24px] text-[#217346]">登录</div>
          <div className="ml-[29px] w-[20px]"><RibbonDisplayIcon /></div>
          <div className="ml-[44px] w-[16px] h-[2px] bg-white" />
          <div className="ml-[45px]"><RestoreIcon /></div>
          <div className="ml-[44px] mr-[20px]"><X size={20} strokeWidth={1.6} color="#fff" /></div>
        </div>
      </div>

      <div className="h-[45px] shrink-0 bg-[#217346] flex text-[18px] leading-[24px] text-white">
        <div className="w-[90px] pr-[2px] pb-[3px] flex items-center justify-center">文件</div>
        <div className="w-[61px] pb-[3px] bg-[#f3f3f3] text-[#217346] flex items-center justify-center">开始</div>
        {MENU.map(([name, w]) => (
          <div key={name} className="flex items-center justify-center pb-[3px]" style={{ width: w }}>
            {name}
          </div>
        ))}
        <div className="ml-[16px] flex items-center pb-[3px]">
          <Lightbulb size={24} strokeWidth={1.4} color="#fff" />
          <span className="ml-[13px] text-[#e4efe8]">操作说明搜索</span>
        </div>
        <div className="ml-auto flex items-center pr-[28px] pb-[3px]">
          <ShareIcon />
          <span className="ml-[5px]">共享</span>
        </div>
      </div>

      <Ribbon />
      <FormulaBar />

      <div className="h-[577px] shrink-0 bg-[#e6e6e6] flex">
        <div className="w-[1895px] overflow-hidden border-r border-[#ababab]">
          <Sheet />
        </div>
        <VScroll />
      </div>

      <TabBar />
      <StatusBar />

      <Watermark />
      <div className="absolute left-[384px] top-[367px] w-[247px] h-[149px] border-[3px] border-[#f33c3c]" />
      <div className="absolute left-[51px] top-[674px] w-[403px] h-[231px] border-[3px] border-[#f33c3c]" />
    </div>
  );
}
